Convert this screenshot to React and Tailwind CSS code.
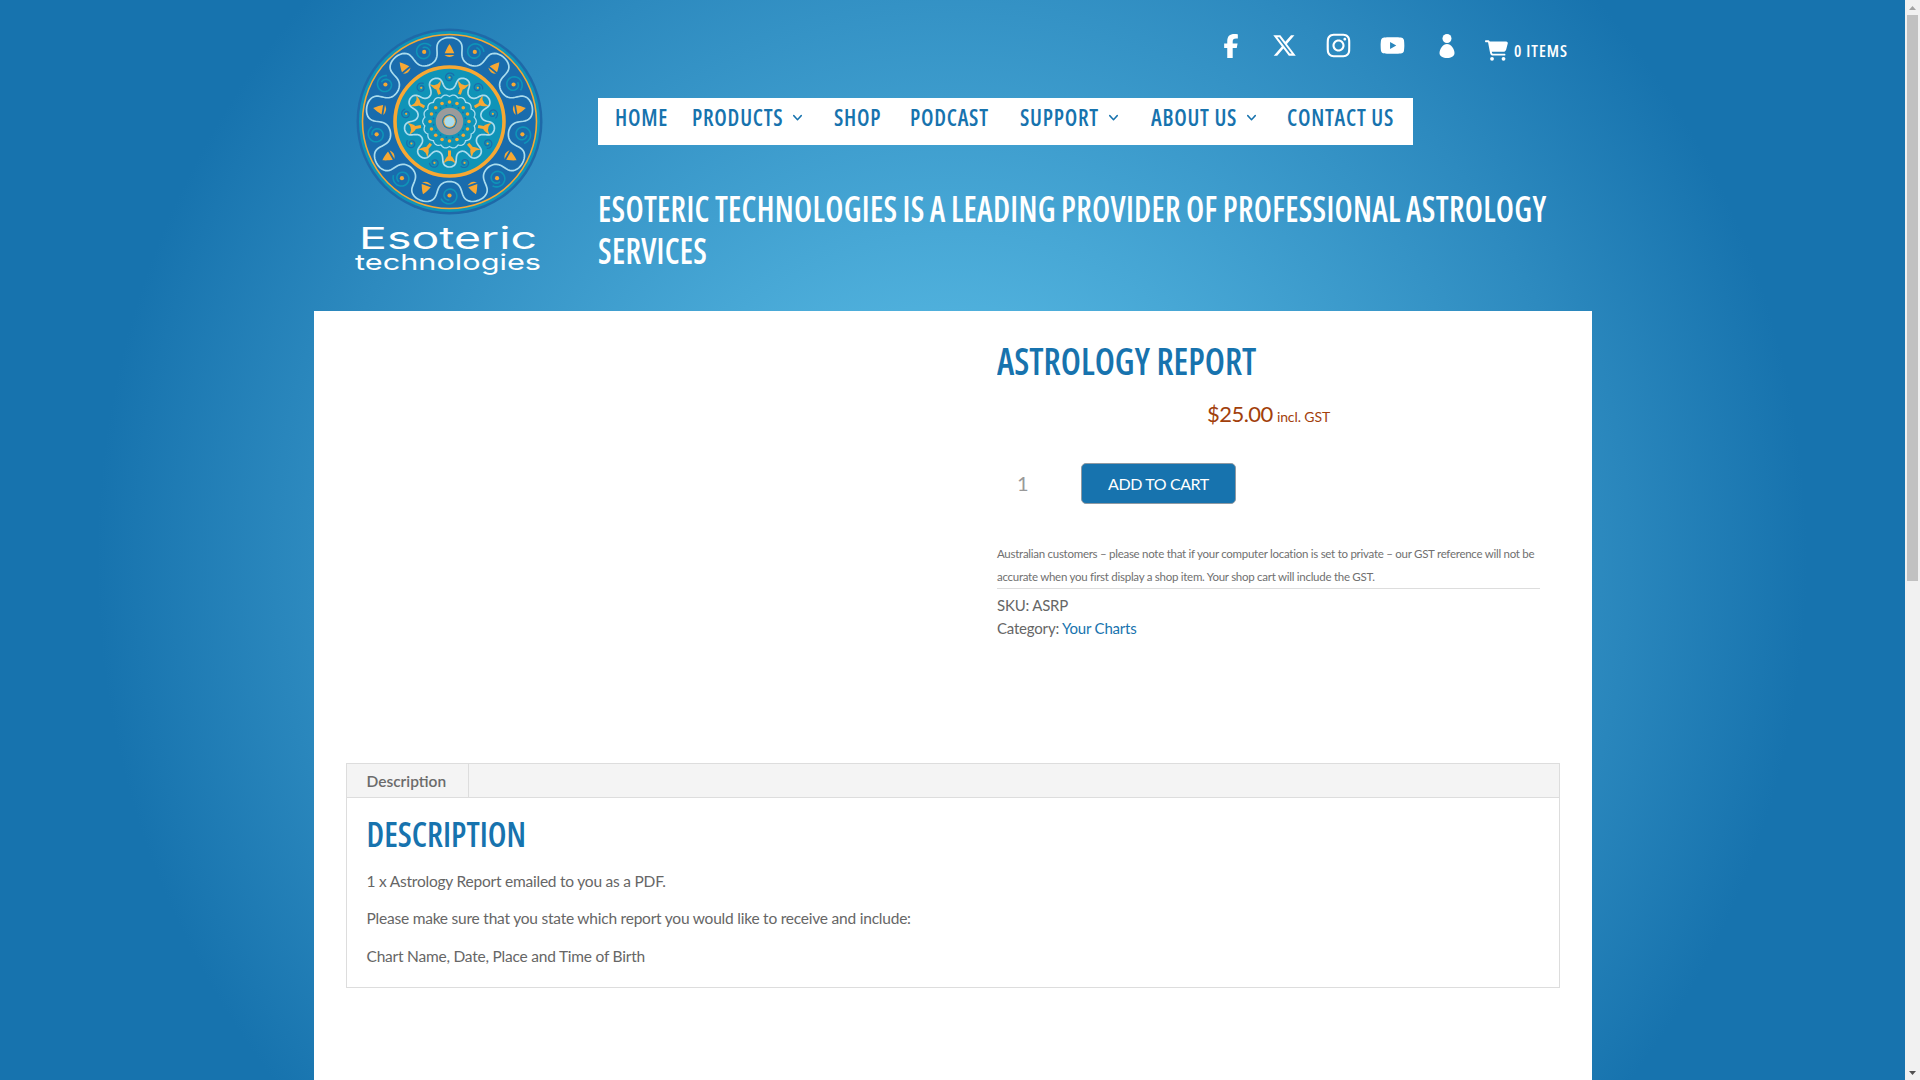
import { ChevronDown } from "lucide-react";
import { FaFacebookF, FaXTwitter, FaInstagram, FaYoutube, FaCartShopping } from "react-icons/fa6";

const CX = 99.5;
const CY = 101.5;
const rad = (d) => (d * Math.PI) / 180;
const polar = (r, deg) => [CX + r * Math.cos(rad(deg)), CY + r * Math.sin(rad(deg))];

function wave(rMin, rMax, phase, bulge) {
  const mid = (rMin + rMax) / 2;
  const a = (rMax - rMin) / 2;
  let d = "";
  for (let t = 0; t <= 360; t += 1) {
    const r = mid + a * Math.cos(rad(9 * t));
    const th = t + bulge * Math.sin(rad(18 * t)) + phase;
    const [x, y] = polar(r, th);
    d += `${t === 0 ? "M" : "L"}${x.toFixed(2)},${y.toFixed(2)}`;
  }
  return d + "Z";
}

function scallop(r0, amp, n) {
  let d = "";
  for (let t = 0; t <= 360; t += 2) {
    const [x, y] = polar(r0 + amp * Math.abs(Math.cos(rad((n * t) / 2))), t);
    d += `${t === 0 ? "M" : "L"}${x.toFixed(2)},${y.toFixed(2)}`;
  }
  return d + "Z";
}

function spiral(cx, cy, start, rFrom, rTo) {
  let d = "";
  for (let i = 0; i <= 40; i += 1) {
    const p = i / 40;
    const r = rFrom + (rTo - rFrom) * p;
    const a = rad(start + p * 430);
    d += `${i === 0 ? "M" : "L"}${(cx + r * Math.cos(a)).toFixed(2)},${(cy + r * Math.sin(a)).toFixed(2)}`;
  }
  return d;
}

const range = (n) => Array.from({ length: n }, (_, i) => i);

function Logo() {
  return (
    <svg width="200" height="262" viewBox="0 0 200 262" className="block">
      <circle cx={CX} cy={CY} r="93" fill="#1f69a8" />
      <circle cx={CX} cy={CY} r="90.5" fill="#0f94b8" />
      <circle cx={CX} cy={CY} r="87" fill="#196cad" stroke="#f7a833" strokeWidth="1.6" />
      <path d={wave(60, 84, -90, 2.6)} fill="none" stroke="#a9dcee" strokeWidth="1.7" />
      {range(9).map((i) => {
        const ang = -90 + i * 40;
        const [x, y] = polar(70, ang);
        return (
          <g key={i} transform={`translate(${x},${y}) rotate(${ang + 90})`}>
            <path d="M0,-7.5 C2.5,-4 3.6,-1 4.8,1.8 L-4.8,1.8 C-3.6,-1 -2.5,-4 0,-7.5Z" fill="#f7a833" />
            <path d="M-5,3.6 Q0,7.5 5,3.6 Z" fill="#f7a833" />
          </g>
        );
      })}
      {range(9).map((i) => {
        const ang = -70 + i * 40;
        const [x, y] = polar(74, ang);
        return (
          <g key={i}>
            <path d={spiral(x, y, ang, 4.5, 9)} fill="none" stroke="#0f94b8" strokeWidth="1.6" />
            <circle cx={x} cy={y} r="2.1" fill="#f7a833" />
          </g>
        );
      })}
      <circle cx={CX} cy={CY} r="54.5" fill="#0f94b8" stroke="#f7a833" strokeWidth="3.6" />
      {range(9).map((i) => {
        const ang = -90 + i * 40;
        const [x, y] = polar(44, ang);
        return (
          <g key={i}>
            <path d={spiral(x, y, ang, 1.8, 5)} fill="none" stroke="#1c6cab" strokeWidth="1.2" />
            <circle cx={x} cy={y} r="1.1" fill="#f7a833" />
          </g>
        );
      })}
      {range(9).map((i) => {
        const ang = -70 + i * 40;
        const [x, y] = polar(36, ang);
        return (
          <path
            key={i}
            transform={`translate(${x},${y}) rotate(${ang + 90})`}
            d="M-6,-6 Q-2,-2.5 0,-3.5 Q2,-2.5 6,-6 Q4,0 1.5,1.5 L1.5,7 L-1.5,7 L-1.5,1.5 Q-4,0 -6,-6Z"
            fill="#f7a833"
          />
        );
      })}
      <path d={wave(32, 45.5, -70, 2)} fill="none" stroke="#a9dcee" strokeWidth="1.7" />
      <path d={scallop(25, 1.8, 18)} fill="none" stroke="#a9dcee" strokeWidth="1.3" />
      {range(16).map((i) => {
        const [x, y] = polar(19.5, i * 22.5);
        return <circle key={i} cx={x} cy={y} r="1.8" fill="#f7a833" />;
      })}
      {range(16).map((i) => {
        const [x, y] = polar(16.2, 11 + i * 22.5);
        return <circle key={i} cx={x} cy={y} r="0.9" fill="#1c6cab" />;
      })}
      <circle cx={CX} cy={CY} r="10.5" fill="none" stroke="#9b9b9b" strokeWidth="6.5" />
      <circle cx={CX} cy={CY} r="7" fill="#1c6cab" />
      <circle cx={CX} cy={CY} r="6.2" fill="#f7a833" />
      <circle cx={CX} cy={CY} r="5.2" fill="#a9dcee" />
      <text
        x="9"
        y="229"
        textLength="178"
        lengthAdjust="spacingAndGlyphs"
        fill="#ffffff"
        fontSize="30"
        fontWeight="400"
        fontFamily="Inter, sans-serif"
      >
        Esoteric
      </text>
      <text
        x="5"
        y="250"
        textLength="186"
        lengthAdjust="spacingAndGlyphs"
        fill="#ffffff"
        fontSize="22"
        fontWeight="400"
        fontFamily="Inter, sans-serif"
      >
        technologies
      </text>
    </svg>
  );
}

function Person() {
  return (
    <svg width="16" height="24" viewBox="0 0 16 24" fill="#ffffff">
      <circle cx="8" cy="4.5" r="4.5" />
      <path d="M8,10 C12,10 15.5,15 15.5,19 C15.5,22.5 12,24 8,24 C4,24 0.5,22.5 0.5,19 C0.5,15 4,10 8,10Z" />
    </svg>
  );
}

const NAV_CLASS =
  "flex items-center gap-[7px] text-[22px] leading-[36px] font-semibold tracking-[0.75px] text-[#1773ae] scale-y-[1.1] origin-center [font-family:'Open_Sans',sans-serif] [font-stretch:75%]";

function NavCaret() {
  return <ChevronDown size={15} strokeWidth={2.4} className="text-[#1773ae] mt-[3px]" />;
}

export default function App() {
  return (
    <div className="flex h-screen overflow-hidden [font-family:Lato,sans-serif] text-[#666666]">
      <div className="flex-1 bg-[radial-gradient(circle_900px_at_952px_560px,#5ab8e2_0%,#4fb0dc_27%,#2d8abf_71%,#1773ae_95%)]">
        <div className="ml-[314px] w-[1278px] h-full flex flex-col">
          <header className="h-[311px] flex shrink-0">
            <div className="w-[284px] shrink-0 pt-[20px] pl-[36px]">
              <Logo />
            </div>
            <div className="flex-1 flex flex-col">
              <div className="h-[98px] pt-[33px] pr-[24px] flex justify-end items-start text-white">
                <div className="w-[54px] h-[25px] flex items-center justify-center">
                  <FaFacebookF size={24} />
                </div>
                <div className="w-[54px] h-[25px] flex items-center justify-center">
                  <FaXTwitter size={25} />
                </div>
                <div className="w-[54px] h-[25px] flex items-center justify-center">
                  <FaInstagram size={27} />
                </div>
                <div className="w-[54px] h-[25px] flex items-center justify-center">
                  <FaYoutube size={25} />
                </div>
                <div className="w-[54px] h-[25px] flex items-center justify-center">
                  <Person />
                </div>
                <div className="ml-[11px] mt-[6px] flex items-center gap-[6px]">
                  <FaCartShopping size={23} />
                  <span className="text-[16.5px] leading-[20px] font-semibold tracking-[1px] mt-[1px] [font-family:'Open_Sans',sans-serif] [font-stretch:75%]">
                    0 ITEMS
                  </span>
                </div>
              </div>
              <nav className="w-[815px] h-[47px] bg-white pl-[17px] flex items-start">
                <div className="w-[77px]"><span className={NAV_CLASS}>HOME</span></div>
                <div className="w-[142px]"><span className={NAV_CLASS}>PRODUCTS<NavCaret /></span></div>
                <div className="w-[76px]"><span className={NAV_CLASS}>SHOP</span></div>
                <div className="w-[110px]"><span className={NAV_CLASS}>PODCAST</span></div>
                <div className="w-[131px]"><span className={NAV_CLASS}>SUPPORT<NavCaret /></span></div>
                <div className="w-[136px]"><span className={NAV_CLASS}>ABOUT US<NavCaret /></span></div>
                <div><span className={NAV_CLASS}>CONTACT US</span></div>
              </nav>
              <div className="mt-[43px] h-[84px] flex items-center">
                <h2 className="w-[960px] text-[32px] leading-[38.2px] font-semibold text-white tracking-[0.3px] [word-spacing:-0.9px] scale-y-[1.1] [font-family:'Open_Sans',sans-serif] [font-stretch:75%]">
                  ESOTERIC TECHNOLOGIES IS A LEADING PROVIDER OF PROFESSIONAL ASTROLOGY SERVICES
                </h2>
              </div>
            </div>
          </header>
          <main className="flex-1 bg-white">
            <div className="h-[452px] flex pl-[33px]">
              <div className="w-[650px] shrink-0" />
              <div className="w-[543px] pt-[24px]">
                <h1 className="text-[35.5px] leading-[50px] font-semibold text-[#1773ae] scale-y-[1.07] [font-family:'Open_Sans',sans-serif] [font-stretch:75%]">
                  ASTROLOGY REPORT
                </h1>
                <div className="mt-[12px] h-[34px] flex items-baseline justify-center gap-[4px] text-[#a2400b]">
                  <span className="text-[22px] leading-[34px] tracking-[-0.5px]">$25.00</span>
                  <span className="text-[14px] leading-[34px] tracking-[-0.1px]">incl. GST</span>
                </div>
                <div className="mt-[32px] flex items-center">
                  <div className="w-[84px] pl-[20px] pb-[2px] text-[20px] text-[#999999]">1</div>
                  <button className="w-[155px] h-[41px] rounded-[5px] border border-[#8f9aa3] bg-[#1773ae] text-white text-[16px] tracking-[-0.4px]">
                    ADD TO CART
                  </button>
                </div>
                <p className="mt-[38px] text-[11.5px] leading-[23px] tracking-[-0.27px] text-[#707070]">
                  Australian customers – please note that if your computer location is set to private – our GST reference will not be accurate when you first display a shop item. Your shop cart will include the GST.
                </p>
                <div className="border-t border-[#dddddd] pt-[5px] text-[15px] leading-[23px] tracking-[-0.2px]">
                  <div>SKU: ASRP</div>
                  <div>Category: <span className="text-[#1773ae]">Your Charts</span></div>
                </div>
              </div>
            </div>
            <section className="ml-[32px] w-[1214px] h-[225px] border border-[#dddddd]">
              <div className="h-[34px] bg-[#f4f4f4] border-b border-[#dddddd]">
                <div className="w-[122px] h-[33px] pl-[19.5px] border-r border-[#dddddd] text-[15.5px] leading-[34px] font-semibold text-[#6b6b6b]">
                  Description
                </div>
              </div>
              <div className="pl-[19.5px]">
                <h2 className="mt-[16px] text-[33px] leading-[40px] font-semibold text-[#1773ae] scale-y-[1.06] [font-family:'Open_Sans',sans-serif] [font-stretch:75%]">
                  DESCRIPTION
                </h2>
                <p className="mt-[15px] text-[15.5px] leading-[24px] tracking-[-0.22px]">1 x Astrology Report emailed to you as a PDF.</p>
                <p className="mt-[13px] text-[15.5px] leading-[24px] tracking-[-0.22px]">Please make sure that you state which report you would like to receive and include:</p>
                <p className="mt-[14px] text-[15.5px] leading-[24px] tracking-[-0.22px]">Chart Name, Date, Place and Time of Birth</p>
              </div>
            </section>
          </main>
        </div>
      </div>
      <div className="w-[15px] shrink-0 bg-[#f1f1f1] flex flex-col">
        <div className="h-[15px] flex items-center justify-center">
          <svg width="7" height="4" viewBox="0 0 7 4" fill="#a3a3a3"><path d="M3.5,0 L7,4 L0,4Z" /></svg>
        </div>
        <div className="mx-[2px] h-[566px] bg-[#c1c1c1]" />
        <div className="flex-1" />
        <div className="h-[15px] flex items-center justify-center">
          <svg width="7" height="4" viewBox="0 0 7 4" fill="#505050"><path d="M0,0 L7,0 L3.5,4Z" /></svg>
        </div>
      </div>
    </div>
  );
}
